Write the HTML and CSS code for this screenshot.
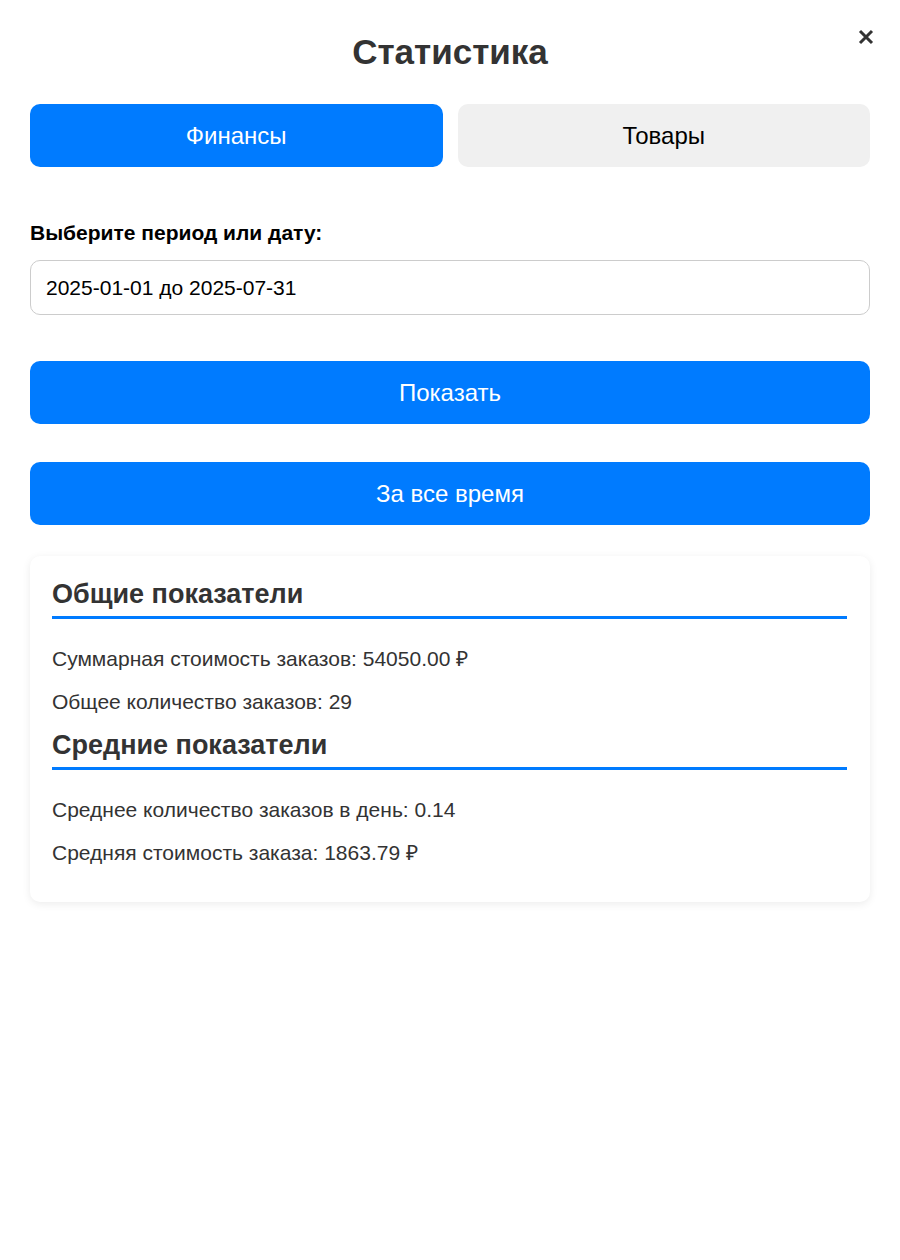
FILE: index.html
```html
<!DOCTYPE html>
<html lang="ru">
<head>
<meta charset="utf-8">
<title>Статистика</title>
<link rel="stylesheet" href="styles.css">
</head>
<body>
<div class="modal">
  <button class="close" aria-label="Закрыть">
    <svg width="16" height="16" viewBox="0 0 16 16"><path d="M2 2 L14 14 M14 2 L2 14" stroke="#333" stroke-width="3" stroke-linecap="butt"/></svg>
  </button>
  <h1 class="title">Статистика</h1>
  <div class="tabs">
    <button class="tab active">Финансы</button>
    <button class="tab">Товары</button>
  </div>
  <label class="label" for="period">Выберите период или дату:</label>
  <input id="period" class="input" type="text" value="2025-01-01 до 2025-07-31">
  <button class="btn btn-show">Показать</button>
  <button class="btn btn-all">За все время</button>
  <div class="card">
    <div class="section">
      <h3 class="section-title">Общие показатели</h3>
      <div class="items">
        <p class="item">Суммарная стоимость заказов: 54050.00 ₽</p>
        <p class="item">Общее количество заказов: 29</p>
      </div>
    </div>
    <div class="section">
      <h3 class="section-title">Средние показатели</h3>
      <div class="items">
        <p class="item">Среднее количество заказов в день: 0.14</p>
        <p class="item">Средняя стоимость заказа: 1863.79 ₽</p>
      </div>
    </div>
  </div>
</div>
</body>
</html>
```
FILE: styles.css
```css
* { box-sizing: border-box; }
html, body {
  margin: 0;
  padding: 0;
  background: #fff;
  font-family: "Liberation Sans", Arial, sans-serif;
}
.modal {
  position: relative;
  width: 900px;
  min-height: 1260px;
  padding: 32px 30px 30px;
  display: flex;
  flex-direction: column;
}
.close {
  position: absolute;
  top: 29px;
  right: 26px;
  width: 16px;
  height: 16px;
  padding: 0;
  border: 0;
  background: none;
  display: flex;
}
.title {
  margin: 0;
  font-size: 35px;
  line-height: 40px;
  font-weight: bold;
  color: #333;
  text-align: center;
}
.tabs {
  margin-top: 32px;
  display: flex;
  gap: 15px;
}
.tab {
  flex: 1;
  height: 63px;
  border: 0;
  border-radius: 10px;
  background: #f0f0f0;
  color: #000;
  font-family: inherit;
  font-size: 24px;
}
.tab.active {
  background: #007bff;
  color: #fff;
}
.label {
  margin-top: 55px;
  font-size: 21px;
  line-height: 22px;
  font-weight: bold;
  color: #000;
}
.input {
  margin-top: 16px;
  height: 55px;
  width: 100%;
  border: 1px solid #ccc;
  border-radius: 10px;
  padding: 0 15px;
  font-family: inherit;
  font-size: 21px;
  color: #000;
  background: #fff;
}
.btn {
  height: 63px;
  width: 100%;
  border: 0;
  border-radius: 10px;
  background: #007bff;
  color: #fff;
  font-family: inherit;
  font-size: 24px;
}
.btn-show { margin-top: 46px; }
.btn-all { margin-top: 38px; }
.card {
  margin-top: 31px;
  background: #fff;
  border-radius: 10px;
  box-shadow: 0 2px 8px rgba(0,0,0,0.08);
  padding: 23px 23px 38px 22px;
  display: flex;
  flex-direction: column;
  gap: 17px;
}
.section-title {
  margin: 0;
  font-size: 27px;
  line-height: 30px;
  font-weight: bold;
  color: #333;
  padding-bottom: 7px;
  border-bottom: 3px solid #007bff;
}
.items {
  margin-top: 29px;
  display: flex;
  flex-direction: column;
  gap: 21px;
}
.item {
  margin: 0;
  font-size: 21px;
  line-height: 22px;
  color: #333;
}
```
